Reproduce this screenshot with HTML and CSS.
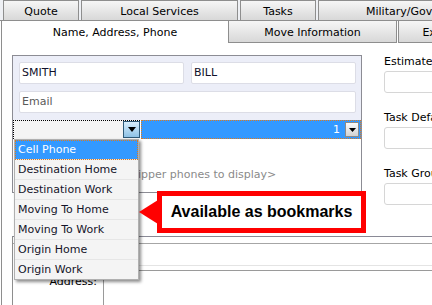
FILE: index.html
```html
<!DOCTYPE html>
<html>
<head>
<meta charset="utf-8">
<link rel="stylesheet" href="styles.css">
</head>
<body>
<div class="tabs">
  <div class="tabrow row1">
    <div class="tab t-quote">Quote</div>
    <div class="tab t-local">Local Services</div>
    <div class="tab t-tasks">Tasks</div>
    <div class="tab t-mil">Military/Government</div>
  </div>
  <div class="tabrow row2">
    <div class="tab active">Name, Address, Phone</div>
    <div class="tab t-move">Move Information</div>
    <div class="tab t-ext">Extra Information</div>
  </div>
</div>
<div class="panel">
  <div class="main">
    <div class="group">
      <div class="inrow">
        <div class="inp val">SMITH</div>
        <div class="inp val">BILL</div>
      </div>
      <div class="inrow">
        <div class="inp ph">Email</div>
      </div>
      <div class="bar">
        <div class="combo">
          <div class="combo-btn"><svg width="8" height="5" viewBox="0 0 8 5"><polygon points="0,0 8,0 4,5" fill="#000"/></svg></div>
        </div>
        <div class="sep"></div>
        <div class="sel">
          <span class="num">1</span>
          <div class="small-btn"><svg width="7" height="4" viewBox="0 0 7 4"><polygon points="0,0 7,0 3.5,4" fill="#000"/></svg></div>
        </div>
      </div>
      <div class="phones">&lt;No shipper phones to display&gt;</div>
    </div>
    <div class="side">
      <div class="field"><div class="flabel">Estimated Move Date</div><div class="fbox"></div></div>
      <div class="field"><div class="flabel">Task Default</div><div class="fbox"></div></div>
      <div class="field last"><div class="flabel">Task Group</div><div class="fbox"></div></div>
    </div>
  </div>
  <div class="addr">
    <div class="addr-head"></div>
    <div class="addr-body">
      <div class="addr-label">Address:</div>
      <div class="addr-field">
        <div class="af1"></div>
        <div class="af2"></div>
        <div class="af3"></div>
      </div>
    </div>
  </div>
</div>

<div class="dropdown">
  <div class="item selected">Cell Phone</div>
  <div class="item">Destination Home</div>
  <div class="item">Destination Work</div>
  <div class="item">Moving To Home</div>
  <div class="item">Moving To Work</div>
  <div class="item">Origin Home</div>
  <div class="item last">Origin Work</div>
</div>

<svg class="arrow" width="19" height="24" viewBox="0 0 19 24"><polygon points="0,12 19,0 19,24" fill="#ff0000"/></svg>
<div class="callout">Available as bookmarks</div>
</body>
</html>
```
FILE: styles.css
```css
* { box-sizing: border-box; }
html, body { margin: 0; padding: 0; }
body {
  width: 432px;
  height: 305px;
  overflow: hidden;
  background: #fff;
  font-family: "DejaVu Sans", sans-serif;
  font-size: 11px;
  color: #000;
  position: relative;
}

/* tabs */
.tabrow { display: flex; white-space: nowrap; }
.row1 {
  gap: 2px;
  padding-left: 3px;
  height: 21px;
  background: #eef0f4;
  border-bottom: 1px solid #8e8e8e;
}
.tab {
  flex: none;
  display: flex;
  align-items: center;
  justify-content: center;
  overflow: hidden;
  background: linear-gradient(#f6f6f6, #d8d8d8);
  border: 1px solid #8e8e8e;
}
.row1 .tab { height: 20px; border-bottom: none; padding-top: 2px; }
.t-quote { width: 76px; }
.t-local { width: 157px; }
.t-tasks { width: 76px; }
.t-mil { width: 209px; }

.row2 { height: 22px; }
.row2 .tab { height: 22px; border-top: none; padding-top: 1px; }
.tab.active {
  width: 227px;
  margin-left: 1px;
  background: #fff;
  border-right: none;
  border-bottom: none;
}
.t-move { width: 169px; }
.t-ext { width: 145px; margin-left: 1px; }

/* panel */
.panel {
  margin-left: 1px;
  border-left: 1px solid #8e8e8e;
}
.main {
  display: flex;
  align-items: flex-start;
  padding: 12px 0 0 10px;
}
.group {
  width: 350px;
  flex: none;
  background: #eceef8;
  border: 1px solid #8c8c94;
  padding: 6px 5px 0 6px;
}
.inrow { display: flex; gap: 7px; margin-bottom: 7px; }
.inp {
  flex: 1;
  height: 22px;
  background: #fff;
  border: 1px solid #dcdde6;
  border-radius: 2px;
  padding-left: 2px;
  line-height: 20px;
}
.val { color: #10102a; }
.ph { color: #5a5a5a; }

.bar {
  display: flex;
  height: 19px;
  margin: 0 -5px 0 -6px;
}
.combo {
  width: 127px;
  background: #f4f4f4;
  border-top: 1px dotted #000;
  border-left: 1px dotted #000;
  display: flex;
  justify-content: flex-end;
  align-items: flex-start;
}
.combo-btn {
  width: 17px;
  height: 17px;
  border: 1px solid #2f5a78;
  background: linear-gradient(#d8eefc, #8ec2e6);
  display: flex;
  align-items: center;
  justify-content: center;
}
.sep { width: 1px; background: #fff; }
.sel {
  flex: 1;
  background: #3399ff;
  border: 1px dotted #e07a1a;
  display: flex;
  justify-content: flex-end;
  align-items: center;
  color: #fff;
}
.num { margin-right: 5px; }
.small-btn {
  width: 14px;
  height: 15px;
  border: 1px solid #8a8a8a;
  background: linear-gradient(#fafafa, #d2d2d2);
  display: flex;
  align-items: center;
  justify-content: center;
  margin-right: 1px;
}
.phones {
  margin: 0 -5px 0 -6px;
  height: 53px;
  background: #fff;
  color: #8a8a8a;
  text-align: center;
  padding-top: 29px;
  line-height: 14px;
  white-space: nowrap;
}

.side { margin-left: 22px; flex: none; }
.field { margin-bottom: 18px; }
.field.last { margin-bottom: 0; }
.flabel { height: 14px; line-height: 14px; margin-bottom: 2px; white-space: nowrap; }
.fbox {
  width: 120px;
  height: 22px;
  background: #fff;
  border: 1px solid #d6d6d6;
  border-radius: 3px;
}

/* address */
.addr {
  margin: 31px 0 0 10px;
  border-top: 1px solid #8a8a96;
  border-left: 1px solid #8e8e8e;
}
.addr-head { height: 7px; border-bottom: 1px solid #a6a6a6; }
.addr-body { display: flex; }
.addr-label {
  width: 90px;
  text-align: right;
  padding: 31px 6px 0 0;
  line-height: 14px;
}
.addr-field { flex: 1; }
.af1 { height: 22px; border-bottom: 1px solid #e4e4e4; }
.af2 { height: 4px; }
.af3 { height: 40px; border-top: 1px solid #9a9a9a; border-left: 1px solid #9a9a9a; }

/* dropdown list overlay */
.dropdown {
  position: absolute;
  left: 14px;
  top: 139px;
  width: 125px;
  background: #f4f4f4;
  border: 1px solid #b0b0b0;
  box-shadow: 2px 2px 3px rgba(0,0,0,0.45);
}
.item {
  height: 20px;
  line-height: 19px;
  padding-left: 3px;
  border-bottom: 1px solid #e6e6e6;
  color: #14142a;
  white-space: nowrap;
}
.item.last { border-bottom: none; height: 19px; }
.item.selected {
  background: #3399ff;
  color: #fff;
  outline: 1px dotted #e07a1a;
  outline-offset: -1px;
}

/* callout overlay */
.arrow {
  position: absolute;
  left: 139px;
  top: 200px;
}
.callout {
  position: absolute;
  left: 157px;
  top: 191px;
  width: 209px;
  height: 42px;
  border: 5px solid #ff0000;
  background: #fff;
  display: flex;
  align-items: center;
  justify-content: center;
  font-family: "Liberation Sans", sans-serif;
  font-weight: bold;
  font-size: 16px;
  color: #000;
  white-space: nowrap;
}
```
